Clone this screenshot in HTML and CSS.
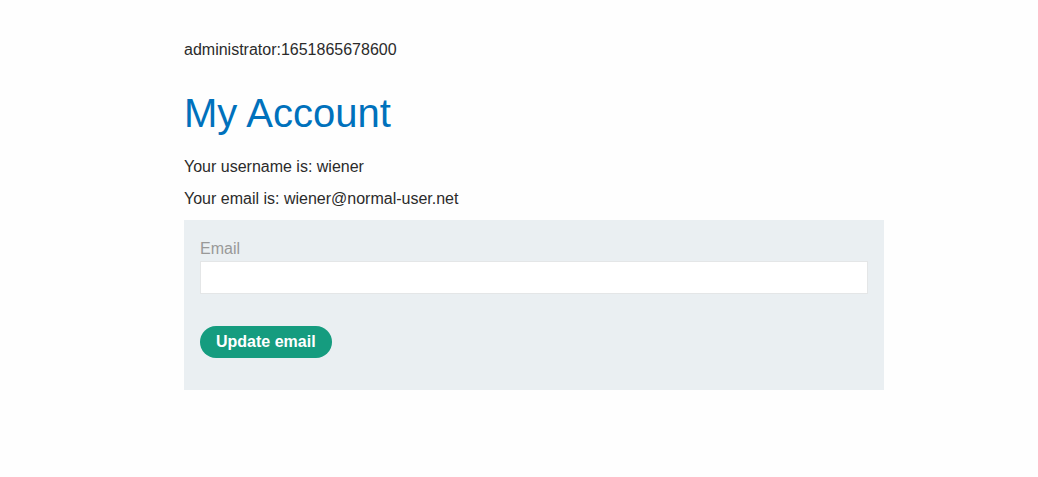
FILE: index.html
```
<!DOCTYPE html>
<html lang="en">
<head>
<meta charset="utf-8">
<meta name="viewport" content="width=device-width, initial-scale=1">
<title>My Account</title>
<link rel="stylesheet" href="styles.css">
</head>
<body>
<main class="account">
  <p class="token">administrator:1651865678600</p>
  <h1 class="title">My Account</h1>
  <p class="detail">Your username is: wiener</p>
  <p class="detail">Your email is: wiener@normal-user.net</p>
  <form class="email-form">
    <label class="label" for="email">Email</label>
    <input class="field" id="email" type="email" name="email">
    <button class="button" type="submit">Update email</button>
  </form>
</main>
</body>
</html>
```
FILE: styles.css
```
* {
  box-sizing: border-box;
}

body {
  margin: 0;
  background: #fefefe;
  color: #2b2b2b;
  font: 16px/24px "Liberation Sans", Arial, sans-serif;
}

.account {
  max-width: 730px;
  margin: 0 auto;
  padding: 38px 0 32px 30px;
}

.token {
  margin: 0 0 25px;
}

.title {
  margin: 0 0 16px;
  color: #0071bc;
  font-size: 40px;
  font-weight: 400;
  line-height: 52px;
}

.detail {
  margin: 0 0 8px;
}

.email-form {
  margin-top: 9px;
  padding: 17px 16px 32px;
  background: #eaeff2;
}

.label {
  display: block;
  color: #999;
}

.field {
  display: block;
  width: 100%;
  height: 33px;
  padding: 4px 8px;
  border: 1px solid #e4e6e7;
  border-radius: 0;
  background: #fff;
  color: #2b2b2b;
  font: inherit;
}

.button {
  display: block;
  height: 32px;
  margin-top: 32px;
  padding: 0 16px;
  border: 0;
  border-radius: 16px;
  background: #159c7f;
  color: #fff;
  font: inherit;
  font-weight: 700;
  cursor: pointer;
}
```
